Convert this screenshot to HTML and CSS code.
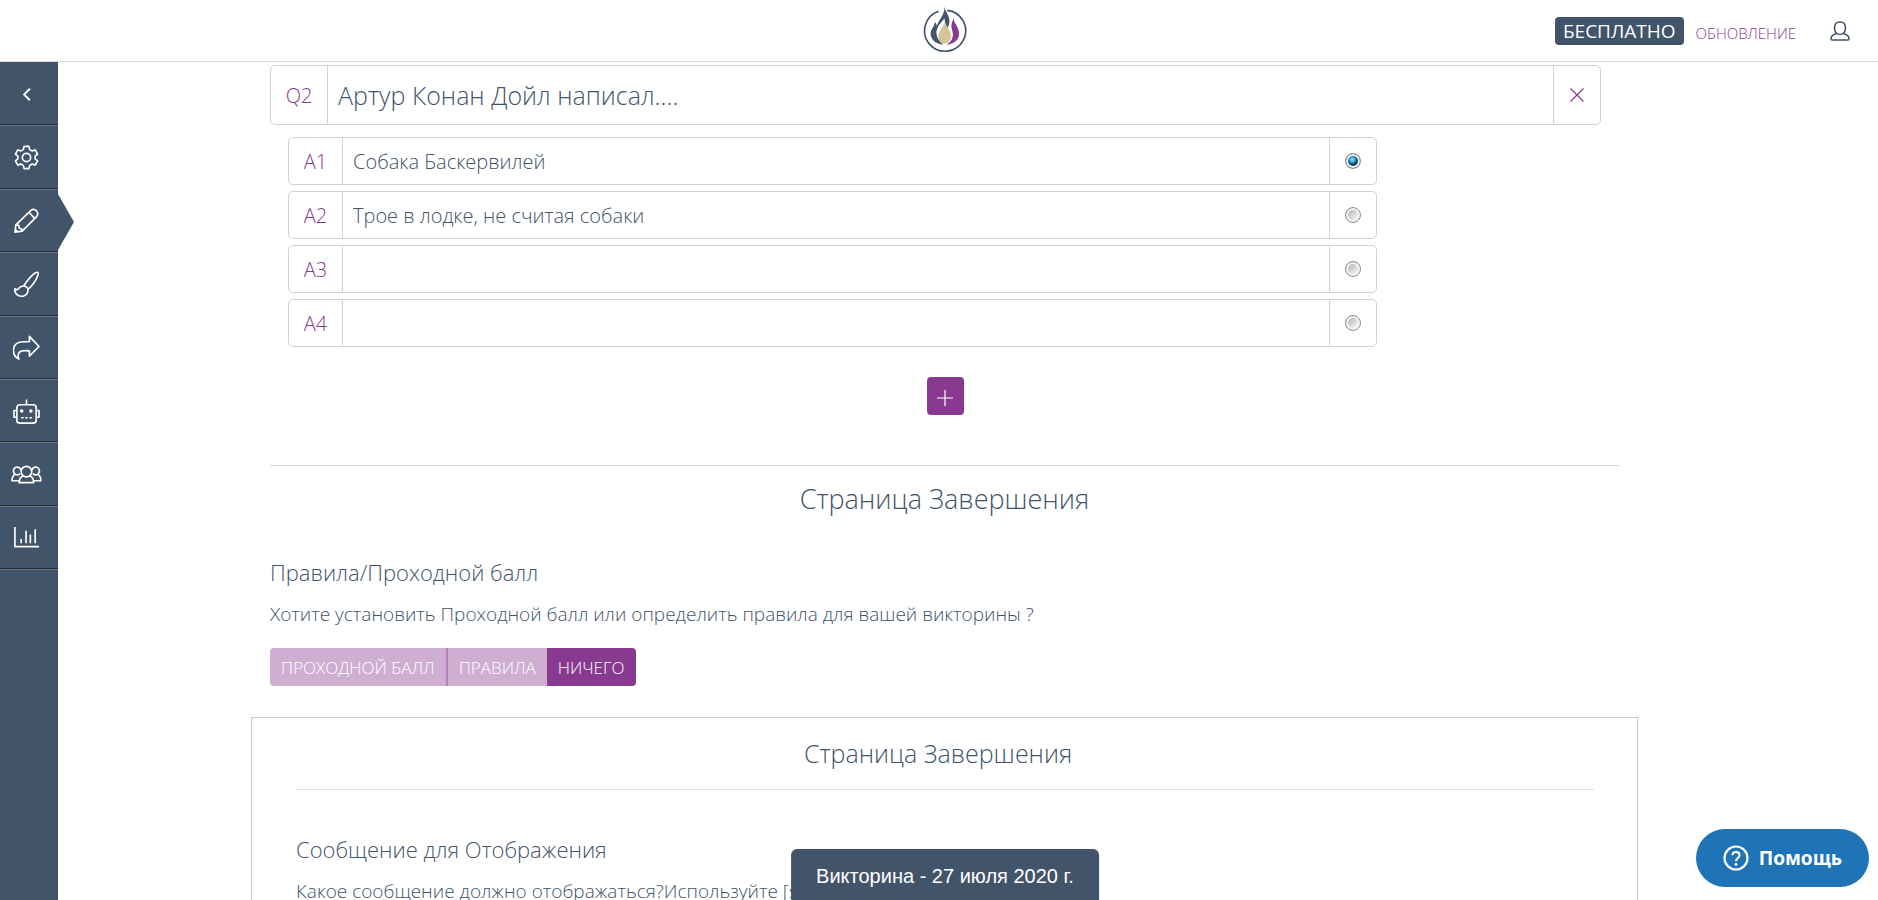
FILE: index.html
```html
<!DOCTYPE html>
<html lang="ru">
<head>
<meta charset="utf-8">
<title>Викторина</title>
<meta name="viewport" content="width=device-width, initial-scale=1">
<link rel="stylesheet" href="styles.css">
</head>
<body>
<header class="topbar">
  <a class="logo" href="#" aria-label="Главная">
    <svg viewBox="66 18 134 142" width="45" height="47">
      <path d="M115 34A62 62 0 1 0 141 31" fill="none" stroke="#42546a" stroke-width="5"/>
      <path d="M133 19C134 36 149 45 148 67C147 76 143 82 141 86C139 75 133 68 133 55C126 66 114 74 110 90C105 106 114 124 130 134C107 134 91 119 91 101C91 87 103 82 103 67C108 70 110 74 110 79C116 58 135 44 133 19Z" fill="#42546a"/>
      <path d="M133 65C134 79 154 92 153 109C152 123 143 131 133 132C122 131 114 122 114 110C114 92 132 82 133 65Z" fill="#d6c498"/>
      <path d="M160 52C159 68 177 80 177 102C177 121 160 135 138 134C152 128 160 115 158 100C157 91 153 85 154 75C155 65 160 62 160 52Z" fill="#883a90"/>
    </svg>
  </a>
  <div class="account">
    <span class="plan">БЕСПЛАТНО</span>
    <a class="upgrade" href="#">ОБНОВЛЕНИЕ</a>
    <a class="user" href="#" aria-label="Профиль">
      <svg viewBox="0 0 20 20" width="20" height="20"><path d="M10 1C13.500 1 15.500 3.500 15.500 7C15.500 9.500 14.500 11.500 13 12.500C17 13.500 19 14.500 19 17.500V18Q19 19 18 19H2Q1 19 1 18V17.500C1 14.500 3 13.500 7 12.500C5.500 11.500 4.500 9.500 4.500 7C4.500 3.500 6.500 1 10 1ZM7 12.500Q10 14.500 13 12.500" fill="none" stroke="currentColor" stroke-width="1.500"/></svg>
    </a>
  </div>
</header>

<nav class="sidebar" aria-label="Разделы">
  <div class="menu">
    <a href="#" aria-label="Назад"><svg viewBox="0 0 28 28"><path d="M17.500 8L11.500 14L17.500 20" stroke-width="2"/></svg></a>
    <a href="#" aria-label="Настройки"><svg viewBox="0 0 28 28"><path d="M11.500 2.500h5l.8 3.300 2.700 1.500 3-1.200 2.500 4.400-2.500 2v3l2.500 2-2.500 4.400-3-1.200-2.700 1.500-.8 3.300h-5l-.8-3.300L8 20.700l-3 1.200-2.500-4.400 2.500-2v-3l-2.500-2L5 6.100l3 1.200 2.700-1.500z"/><circle cx="14" cy="14" r="4.300"/></svg></a>
    <a href="#" class="active" aria-label="Редактор"><svg viewBox="0 0 28 28"><path d="M2 26L3 18.500L18 4Q21 1 24.500 4Q27 7.500 24 10.500L9.500 25L2 26ZM16.500 5.500L22.500 12M3 18.500L6 19L6.500 22L9 22.500L9.500 25M2 23L5 26"/></svg></a>
    <a href="#" aria-label="Дизайн"><svg viewBox="0 0 28 28"><path d="M11 15.500Q18 5 23 2Q27 0 26 4Q23 13 15.500 19M11 15.500Q14.500 15.500 15.500 19Q16 24 11 26Q5 27 2.500 22.500Q1.500 20.500 2 18.500L4 19.500Q5.500 19 6.500 17.500Q8 15.500 11 15.500Z"/></svg></a>
    <a href="#" aria-label="Поделиться"><svg viewBox="0 0 28 28"><path d="M17 2.500L27 13L17 23V17.500Q9 16.500 6.500 19Q4.500 21.500 6 26Q0 23 0.500 16.500Q1 8 11 8H17Z"/></svg></a>
    <a href="#" aria-label="Бот"><svg viewBox="0 0 28 28"><rect x="4" y="7" width="20" height="19" rx="3"/><path d="M14 7V1.500M4 13H1V20H4M24 13H27V20H24"/><path d="M8.500 20.500H20" stroke-dasharray="2.500 1.800"/><circle cx="9" cy="13.500" r="1" fill="currentColor"/><circle cx="18.500" cy="13.500" r="1" fill="currentColor"/></svg></a>
    <a href="#" aria-label="Аудитория"><svg viewBox="0 0 32 28"><circle cx="16" cy="11" r="5.500"/><path d="M10.500 10A4 4 0 1 0 9.500 13M21.500 10A4 4 0 1 1 22.500 13M12.500 15.500Q8.500 16.500 8.500 22.500H23.500Q23.500 16.500 19.500 15.500M5 13.500Q1 15 1 20.500H8.500M27 13.500Q31 15 31 20.500H23.500"/></svg></a>
    <a href="#" aria-label="Отчёты"><svg viewBox="0 0 28 28"><path d="M2 3V23.500H27M8.500 20V15.500M13.500 20V7M18 20V11M23 20V5.500"/></svg></a>
  </div>
</nav>

<main class="page">
  <div class="content">
    <section class="question">
      <div class="field field-question">
        <label for="q2">Q2</label>
        <input type="text" id="q2" value="Артур Конан Дойл написал....">
        <button type="button" aria-label="Удалить вопрос"><svg viewBox="0 0 14 14" width="14" height="14"><path d="M.5 .5L13.500 13.500M13.500 .5L.5 13.500" stroke="currentColor" stroke-width="1.200"/></svg></button>
      </div>
      <div class="answers">
        <div class="field">
          <label for="a1">A1</label>
          <input type="text" id="a1" value="Собака Баскервилей">
          <span class="pick"><input type="radio" name="correct" aria-label="Правильный ответ A1" checked></span>
        </div>
        <div class="field">
          <label for="a2">A2</label>
          <input type="text" id="a2" value="Трое в лодке, не считая собаки">
          <span class="pick"><input type="radio" name="correct" aria-label="Правильный ответ A2"></span>
        </div>
        <div class="field">
          <label for="a3">A3</label>
          <input type="text" id="a3">
          <span class="pick"><input type="radio" name="correct" aria-label="Правильный ответ A3"></span>
        </div>
        <div class="field">
          <label for="a4">A4</label>
          <input type="text" id="a4">
          <span class="pick"><input type="radio" name="correct" aria-label="Правильный ответ A4"></span>
        </div>
      </div>
      <button type="button" class="add" aria-label="Добавить вопрос"><svg viewBox="0 0 16 16" width="16" height="16"><path d="M8 0V16M0 8H16" stroke="currentColor" stroke-width="1.200"/></svg></button>
    </section>

    <section class="finish">
      <h1>Страница Завершения</h1>
      <h2>Правила/Проходной балл</h2>
      <p>Хотите установить Проходной балл или определить правила для вашей викторины ?</p>
      <div class="switch">
        <button type="button">ПРОХОДНОЙ БАЛЛ</button>
        <button type="button">ПРАВИЛА</button>
        <button type="button" class="on">НИЧЕГО</button>
      </div>
    </section>

    <section class="panel">
      <h2 class="panel-title">Страница Завершения</h2>
      <h3>Сообщение для Отображения</h3>
      <p>Какое сообщение должно отображаться?Используйте [score]</p>
    </section>
  </div>
</main>

<div class="quiz-name">Викторина - 27 июля 2020 г.</div>
<button type="button" class="help">
  <svg viewBox="0 0 26 26" width="26" height="26"><circle cx="13" cy="13" r="11.500" fill="none" stroke="currentColor" stroke-width="2.200"/><path d="M9.500 10.300C9.500 6 16.500 6 16.500 10.300C16.500 13 13 13 13 16.200" fill="none" stroke="currentColor" stroke-width="2"/><circle cx="13" cy="19.300" r="1.400" fill="currentColor"/></svg>
  <span>Помощь</span>
</button>
</body>
</html>
```
FILE: styles.css
```css
* { box-sizing: border-box; }

body {
  margin: 0;
  height: 100vh;
  overflow: hidden;
  background: #fff;
  color: #42546a;
  font-family: "Open Sans", "Noto Sans", sans-serif;
  font-weight: 300;
}

button, input { font: inherit; color: inherit; }
button { cursor: pointer; border: 0; padding: 0; }
a { text-decoration: none; }
svg { display: block; fill: none; }
h1, h2, h3, p { margin: 0; font-weight: 300; }

.topbar {
  position: fixed;
  inset: 0 0 auto 0;
  z-index: 3;
  display: grid;
  grid-template-columns: 1fr auto 1fr;
  align-items: center;
  height: 62px;
  padding: 0 28px 0 38px;
  background: #fff;
  border-bottom: 1px solid #d9dadc;
}
.logo { grid-column: 2; padding-bottom: 2px; }
.account {
  display: flex;
  align-items: center;
  justify-content: flex-end;
}
.plan {
  padding: 0 8px;
  border-radius: 4px;
  background: #42546a;
  color: #fff;
  font-size: 19px;
  font-weight: 400;
  line-height: 28px;
}
.upgrade {
  margin: 4px 34px 0 12px;
  color: #883a90;
  font-size: 15px;
}
.user { color: #42546a; }

.sidebar {
  position: fixed;
  inset: 62px auto 0 0;
  z-index: 2;
  width: 58px;
  background: #42546a;
}
.menu {
  display: grid;
  grid-auto-rows: 1fr;
  height: 507px;
}
.menu a {
  position: relative;
  display: flex;
  align-items: center;
  padding: 2px 0 0 13px;
  color: #fff;
  border-bottom: 1px solid #1e2b3c;
  box-shadow: 0 1px 0 #77787a;
}
.menu svg {
  height: 27px;
  stroke: currentColor;
  stroke-width: 1.700;
  stroke-linejoin: round;
}
.menu a:nth-child(7) { padding-left: 11px; }
.menu .active::after {
  content: "";
  position: absolute;
  left: 100%;
  top: 5px;
  border-left: 16px solid #42546a;
  border-top: 28px solid transparent;
  border-bottom: 28px solid transparent;
}

.page { padding: 65px 12px 0 23px; }
.content {
  max-width: 1387px;
  margin: 0 auto;
}

.question {
  margin: 0 18px 0 19px;
  padding-bottom: 50px;
  border-bottom: 1px solid #d9dadc;
}
.field {
  display: flex;
  height: 48px;
  border: 1px solid #cdd2d9;
  border-radius: 5px;
  font-size: 20px;
}
.field label, .field button, .pick {
  flex: none;
  display: flex;
  align-items: center;
  justify-content: center;
  background: none;
  color: #883a90;
}
.field label { width: 54px; border-right: 1px solid #cdd2d9; }
.field [type="text"] {
  flex: 1;
  min-width: 0;
  padding: 0 10px;
  border: 0;
  background: none;
}
.field button, .pick { width: 47px; border-left: 1px solid #cdd2d9; }
.field-question { height: 60px; margin-right: 19px; }
.field-question label { width: 57px; }
.field-question [type="text"] { font-size: 25px; }
.answers {
  display: grid;
  gap: 6px;
  width: 82%;
  padding: 12px 0 0 18px;
}
.pick input {
  appearance: none;
  width: 16px;
  height: 16px;
  margin: 0;
  border: 1px solid #8f8f8f;
  border-radius: 50%;
  background: linear-gradient(135deg, #b9bdc4 25%, #f0f0f0 75%);
  box-shadow: inset 0 0 0 2px #f4f4f4;
}
.pick input:checked {
  background: radial-gradient(circle at 45% 40%, #a5e3f8 0, #2597cc 3px, #12395a 5px);
}
.add {
  display: flex;
  align-items: center;
  justify-content: center;
  width: 37px;
  height: 38px;
  margin: 30px auto 0;
  padding-top: 3px;
  border-radius: 4px;
  background: #883a90;
  color: #fff;
}

.finish { padding: 13px 19px 31px; }
.finish h1 {
  font-size: 27px;
  line-height: 40px;
  text-align: center;
}
.finish h2, .panel h3 { font-size: 22px; line-height: 34px; }
.finish h2 { margin-top: 36px; }
.finish p, .panel p { font-size: 19px; line-height: 28px; }
.finish p { margin: 11px 0 20px; }
.switch {
  display: inline-flex;
  overflow: hidden;
  border-radius: 4px;
  vertical-align: top;
}
.switch button {
  height: 38px;
  padding: 0 11px;
  background: #ceafd2;
  color: #fff;
  font-size: 17px;
}
.switch button:first-child { border-right: 2px solid #b57fba; }
.switch button.on { background: #883a90; }

.panel {
  padding: 15px 43px 60px 44px;
  border: 1px solid #c6c7c9;
}
.panel-title {
  padding: 0 14px 16px 0;
  margin-bottom: 42px;
  border-bottom: 1px solid #e0e1e3;
  font-size: 25px;
  line-height: 40px;
  text-align: center;
}
.panel p { margin-top: 11px; }

.quiz-name {
  position: fixed;
  bottom: 0;
  left: 50%;
  z-index: 4;
  margin-left: 6px;
  transform: translateX(-50%);
  padding: 16px 25px 12px;
  border-radius: 6px 6px 0 0;
  background: #42546a;
  color: #fff;
  font: 400 20px/23px "Liberation Sans", Arial, sans-serif;
  white-space: nowrap;
}
.help {
  position: fixed;
  right: 9px;
  bottom: 13px;
  z-index: 4;
  display: flex;
  align-items: center;
  gap: 10px;
  height: 58px;
  padding: 0 27px;
  border-radius: 29px;
  background: #1f73b7;
  color: #fff;
  font: 700 19px/28px "Noto Sans", sans-serif;
}
```
